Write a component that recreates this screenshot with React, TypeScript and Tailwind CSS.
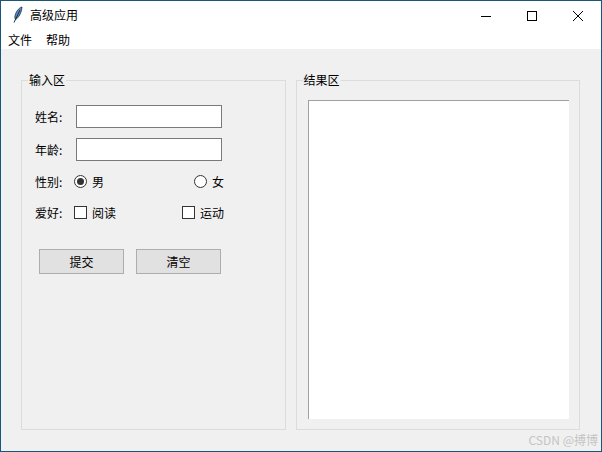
import React from 'react';

const font = { fontFamily: '"Noto Sans CJK SC", sans-serif' };

function Radio({ on }: { on?: boolean }) {
  return (
    <span className="flex h-[13px] w-[13px] items-center justify-center rounded-full border border-[#333] bg-white">
      {on && <span className="h-[7px] w-[7px] rounded-full bg-[#333]" />}
    </span>
  );
}

function Check() {
  return <span className="block h-[13px] w-[13px] border border-[#333] bg-white" />;
}

function Label({ children }: { children: React.ReactNode }) {
  return <span className="w-[41px] shrink-0 leading-4 text-black">{children}</span>;
}

export default function App() {
  return (
    <div
      className="relative flex h-[452px] w-[602px] flex-col overflow-hidden border border-[#17587a] bg-[#f0f0f0] text-[12px] text-black"
      style={font}
    >
      {/* title bar */}
      <div className="flex h-[29px] shrink-0 items-center bg-white pl-[11px]">
        <svg width="12" height="18" viewBox="0 0 12 18" className="mb-[2px] mr-[6px]">
          <path d="M10 1 C6.5 2 3.5 6 2.8 11 L3.4 13.5 C6.5 12 9.5 7 10 1 Z" fill="#5b8fc9" stroke="#1d2b3f" strokeWidth="0.8" />
          <path d="M8 4 L2 16.5" stroke="#1d2b3f" strokeWidth="1" fill="none" />
        </svg>
        <span className="mb-[2px] leading-4">高级应用</span>
        <div className="ml-auto flex items-center">
          <div className="flex h-[29px] w-[46px] items-center justify-center">
            <svg width="10" height="10" viewBox="0 0 10 10"><path d="M0 5.5H10" stroke="#000" /></svg>
          </div>
          <div className="flex h-[29px] w-[46px] items-center justify-center">
            <svg width="10" height="10" viewBox="0 0 10 10"><rect x="0.5" y="0.5" width="9" height="9" fill="none" stroke="#000" /></svg>
          </div>
          <div className="flex h-[29px] w-[46px] items-center justify-center">
            <svg width="10" height="10" viewBox="0 0 10 10"><path d="M0 0L10 10M10 0L0 10" stroke="#000" strokeWidth="1" /></svg>
          </div>
        </div>
      </div>

      {/* menu */}
      <div className="flex h-[19px] shrink-0 items-center gap-[14px] bg-white pl-[7px]">
        <span className="leading-4">文件</span>
        <span className="leading-4">帮助</span>
      </div>

      {/* content */}
      <div className="flex flex-1 gap-[10px] pl-[20px] pr-[21px] pt-[23px]">
        <fieldset className="h-[358px] w-[265px] border border-[#dcdcdc] pl-[13px]">
          <legend className="-ml-[7px] px-px leading-4">输入区</legend>

          <div className="mt-[17px] flex items-center">
            <Label>姓名:</Label>
            <input className="h-[23px] w-[146px] border border-[#7a7a7a] bg-white" />
          </div>
          <div className="mt-[10px] flex items-center">
            <Label>年龄:</Label>
            <input className="h-[23px] w-[146px] border border-[#7a7a7a] bg-white" />
          </div>

          <div className="mt-[13px] flex h-[15px] w-[189px] items-center">
            <span className="w-[39px] shrink-0 leading-[14px]">性别:</span>
            <div className="flex flex-1 items-center justify-between">
              <span className="flex items-center gap-[5px] leading-[14px]"><Radio on />男</span>
              <span className="flex items-center gap-[5px] leading-[14px]"><Radio />女</span>
            </div>
          </div>
          <div className="mt-[16px] flex h-[15px] w-[189px] items-center">
            <span className="w-[39px] shrink-0 leading-[14px]">爱好:</span>
            <div className="flex flex-1 items-center justify-between">
              <span className="flex items-center gap-[5px] leading-[14px]"><Check />阅读</span>
              <span className="flex items-center gap-[5px] leading-[14px]"><Check />运动</span>
            </div>
          </div>

          <div className="ml-[4px] mt-[29px] flex gap-[12px]">
            <button className="h-[25px] w-[85px] border border-[#adadad] bg-[#e1e1e1]">提交</button>
            <button className="h-[25px] w-[85px] border border-[#adadad] bg-[#e1e1e1]">清空</button>
          </div>
        </fieldset>

        <fieldset className="h-[358px] w-[285px] border border-[#dcdcdc] pl-[11px]">
          <legend className="-ml-[5px] px-px leading-4">结果区</legend>
          <div className="mt-[12px] h-[319px] w-[261px] border-l border-t border-[#a0a0a0] bg-white" />
        </fieldset>
      </div>

      {/* watermark from the image host */}
      <span className="absolute bottom-[3px] right-[3px] text-[12px] leading-4 text-[#c4c4c4]">CSDN @搏博</span>
    </div>
  );
}
